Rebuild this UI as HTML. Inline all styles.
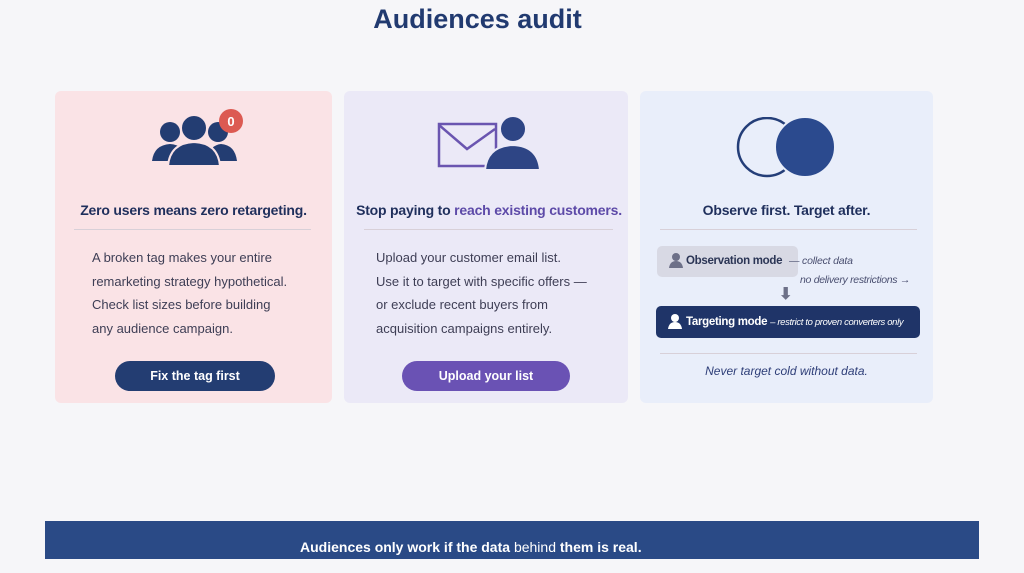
<!DOCTYPE html>
<html><head><meta charset="utf-8"><style>
*{margin:0;padding:0;box-sizing:border-box}
body{width:1024px;height:559px;background:#f6f6f9;font-family:"Liberation Sans",sans-serif;position:relative;overflow:hidden;color:#1f2f5c}
.t{position:absolute;left:0;width:955px;text-align:center;top:4px;font-size:27px;font-weight:bold;color:#213a70}
.c{position:absolute;top:91px;height:312px;border-radius:6px}
.h{position:absolute;left:0;right:0;text-align:center;font-weight:bold;font-size:14px;top:111px;color:#1f2f5c;letter-spacing:-0.2px}
.hr{position:absolute;height:1px;background:#d8d0d8;top:138px}
.p{position:absolute;font-size:13px;line-height:23.5px;color:#3e3e55}
.b{position:absolute;top:270px;height:30px;border-radius:15px;color:#fff;font-weight:bold;font-size:12.5px;text-align:center;line-height:30px}
.foot{position:absolute;left:45px;top:521px;width:934px;height:38px;background:#2a4a86;color:#fff;font-size:14px;font-weight:bold;line-height:52px;padding-left:255px;white-space:nowrap}
</style></head><body>
<div class="t">Audiences audit</div>

<div class="c" style="left:55px;width:277px;background:#fae3e6">
<svg style="position:absolute;left:96px;top:18px" width="95" height="62" viewBox="0 0 95 62">
<circle cx="19" cy="23" r="10" fill="#233d72"/><path d="M1 52 Q3 36 19 35 Q33 36 36 48 L36 52Z" fill="#233d72"/>
<circle cx="67" cy="23" r="10" fill="#233d72"/><path d="M56 48 Q60 36 70 35 Q84 36 86 52 L56 52Z" fill="#233d72"/>
<circle cx="43" cy="19" r="13" fill="#233d72" stroke="#fae3e6" stroke-width="2"/><path d="M17 57 Q19 34 43 33 Q67 34 69 57Z" fill="#233d72" stroke="#fae3e6" stroke-width="2"/>
<circle cx="80" cy="12" r="12" fill="#dc5a52"/><text x="80" y="17" fill="#fff" font-size="13" font-weight="bold" text-anchor="middle" font-family="Liberation Sans">0</text>
</svg>
<div class="h">Zero users means zero retargeting.</div>
<div class="hr" style="left:19px;right:21px"></div>
<div class="p" style="left:37px;top:155px">A broken tag makes your entire<br>remarketing strategy hypothetical.<br>Check list sizes before building<br>any audience campaign.</div>
<div class="b" style="left:60px;width:160px;background:#233d72">Fix the tag first</div>
</div>

<div class="c" style="left:344px;width:284px;background:#ebe9f7">
<svg style="position:absolute;left:93px;top:24px" width="104" height="56" viewBox="0 0 104 56">
<rect x="2" y="9" width="57" height="42" fill="none" stroke="#6a55b0" stroke-width="2.5"/>
<path d="M2 10 L30 34 L58 14" fill="none" stroke="#6a55b0" stroke-width="2.5"/>
<circle cx="76" cy="14" r="13" fill="#2e4585" stroke="#ebe9f7" stroke-width="2"/>
<path d="M48 55 Q50 31 76 30 Q101 31 103 55Z" fill="#2e4585" stroke="#ebe9f7" stroke-width="2"/>
</svg>
<div class="h" style="left:6px"><span>Stop paying to </span><span style="color:#5d4aa8">reach existing customers.</span></div>
<div class="hr" style="left:20px;right:15px"></div>
<div class="p" style="left:32px;top:155px">Upload your customer email list.<br>Use it to target with specific offers —<br>or exclude recent buyers from<br>acquisition campaigns entirely.</div>
<div class="b" style="left:58px;width:168px;background:#6a52b4">Upload your list</div>
</div>

<div class="c" style="left:640px;width:293px;background:#e9eefa">
<svg style="position:absolute;left:96px;top:26px" width="102" height="62" viewBox="0 0 102 62">
<circle cx="31" cy="30" r="29" fill="none" stroke="#243e78" stroke-width="2.5"/>
<circle cx="69" cy="30" r="30" fill="#2b4a8e" stroke="#e9eefa" stroke-width="2"/>
</svg>
<div class="h">Observe first. Target after.</div>
<div class="hr" style="left:20px;right:16px"></div>
<div style="position:absolute;left:17px;top:155px;width:141px;height:31px;background:#d8d9e4;border-radius:5px;font-size:11.5px;font-weight:bold;line-height:31px;padding-left:29px;color:#2b3555;letter-spacing:-0.3px">Observation mode</div>
<svg style="position:absolute;left:29px;top:162px" width="14" height="15"><circle cx="7" cy="4" r="4" fill="#6d7088"/><path d="M0 15 Q1 8 7 8 Q13 8 14 15Z" fill="#6d7088"/></svg>
<div style="position:absolute;left:149px;top:164px;font-size:10.5px;font-style:italic;color:#4a4f70;letter-spacing:-0.2px">— collect data</div>
<div style="position:absolute;left:160px;top:183px;font-size:10.5px;font-style:italic;color:#4a4f70;letter-spacing:-0.3px">no delivery restrictions →</div>
<div style="position:absolute;left:139px;top:193px;font-size:16px;color:#6d7088;font-weight:bold">⬇</div>
<div style="position:absolute;left:16px;top:215px;width:264px;height:32px;background:#1f3468;border-radius:5px;color:#fff;font-size:11.5px;font-weight:bold;line-height:32px;padding-left:30px;white-space:nowrap;letter-spacing:-0.3px;overflow:hidden">Targeting mode <span style="font-weight:normal;font-style:italic;font-size:9.5px;letter-spacing:-0.35px">– restrict to proven converters only</span></div>
<svg style="position:absolute;left:28px;top:223px" width="14" height="15"><circle cx="7" cy="4" r="4" fill="#fff"/><path d="M0 15 Q1 8 7 8 Q13 8 14 15Z" fill="#fff"/></svg>
<div class="hr" style="left:20px;right:16px;top:262px"></div>
<div style="position:absolute;left:0;right:0;top:273px;text-align:center;font-size:12px;font-style:italic;color:#2e3e78">Never target cold without data.</div>
</div>

<div class="foot">Audiences only work if the data <span style="font-weight:normal">behind</span> them is real.</div>
</body></html>
